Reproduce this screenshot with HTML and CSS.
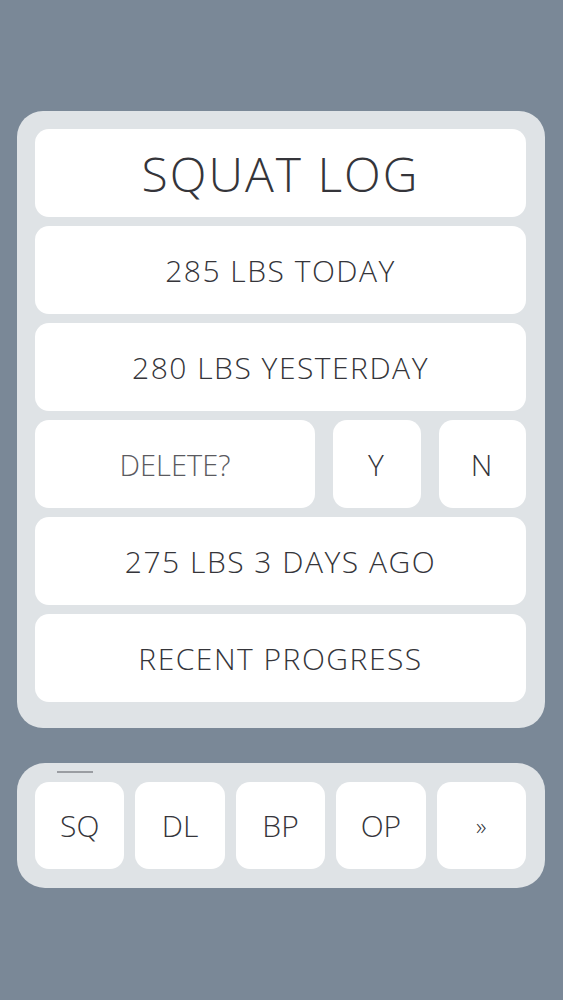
FILE: index.html
```html
<!DOCTYPE html>
<html>
<head>
<meta charset="utf-8">
<link rel="stylesheet" href="styles.css">
</head>
<body>
<div class="screen">
  <div class="card">
    <div class="row title">SQUAT LOG</div>
    <div class="row">285 LBS TODAY</div>
    <div class="row">280 LBS YESTERDAY</div>
    <div class="confirm">
      <div class="row ask">DELETE?</div>
      <div class="row key">Y</div>
      <div class="row key">N</div>
    </div>
    <div class="row">275 LBS 3 DAYS AGO</div>
    <div class="row">RECENT PROGRESS</div>
  </div>
  <div class="nav">
    <span class="indicator"></span>
    <div class="tab">SQ</div>
    <div class="tab">DL</div>
    <div class="tab">BP</div>
    <div class="tab">OP</div>
    <div class="tab more">»</div>
  </div>
</div>
</body>
</html>
```
FILE: styles.css
```css
* { box-sizing: border-box; }
html, body { margin: 0; padding: 0; }
body {
  background: #7a8897;
  font-family: "Open Sans", "Liberation Sans", sans-serif;
  font-weight: 300;
  color: #35353a;
  width: 563px;
  height: 1000px;
}
.screen {
  padding: 111px 18px 0 17px;
  display: flex;
  flex-direction: column;
  gap: 35px;
}
.card {
  background: #dfe3e6;
  border-radius: 26px;
  padding: 18px 19px 26px 18px;
  display: flex;
  flex-direction: column;
  gap: 9px;
}
.row {
  background: #fff;
  border-radius: 14px;
  height: 88px;
  display: flex;
  align-items: center;
  justify-content: center;
  font-size: 30px;
  letter-spacing: 1.5px;
}
.title { font-size: 48px; letter-spacing: 2px; }
.confirm {
  display: flex;
  gap: 18px;
}
.ask { flex: 0 0 280px; color: #5a5a60; font-size: 29px; letter-spacing: 0; }
.key { flex: 1; }
.nav {
  position: relative;
  background: #dfe3e6;
  border-radius: 28px;
  height: 125px;
  padding: 19px 19px 19px 18px;
  display: flex;
  gap: 11px;
}
.indicator {
  position: absolute;
  left: 40px;
  top: 8px;
  width: 36px;
  height: 2px;
  background: #9a9da2;
}
.tab {
  flex: 1;
  background: #fff;
  border-radius: 14px;
  display: flex;
  align-items: center;
  justify-content: center;
  font-size: 30px;
}
.more { font-size: 24px; }
```
